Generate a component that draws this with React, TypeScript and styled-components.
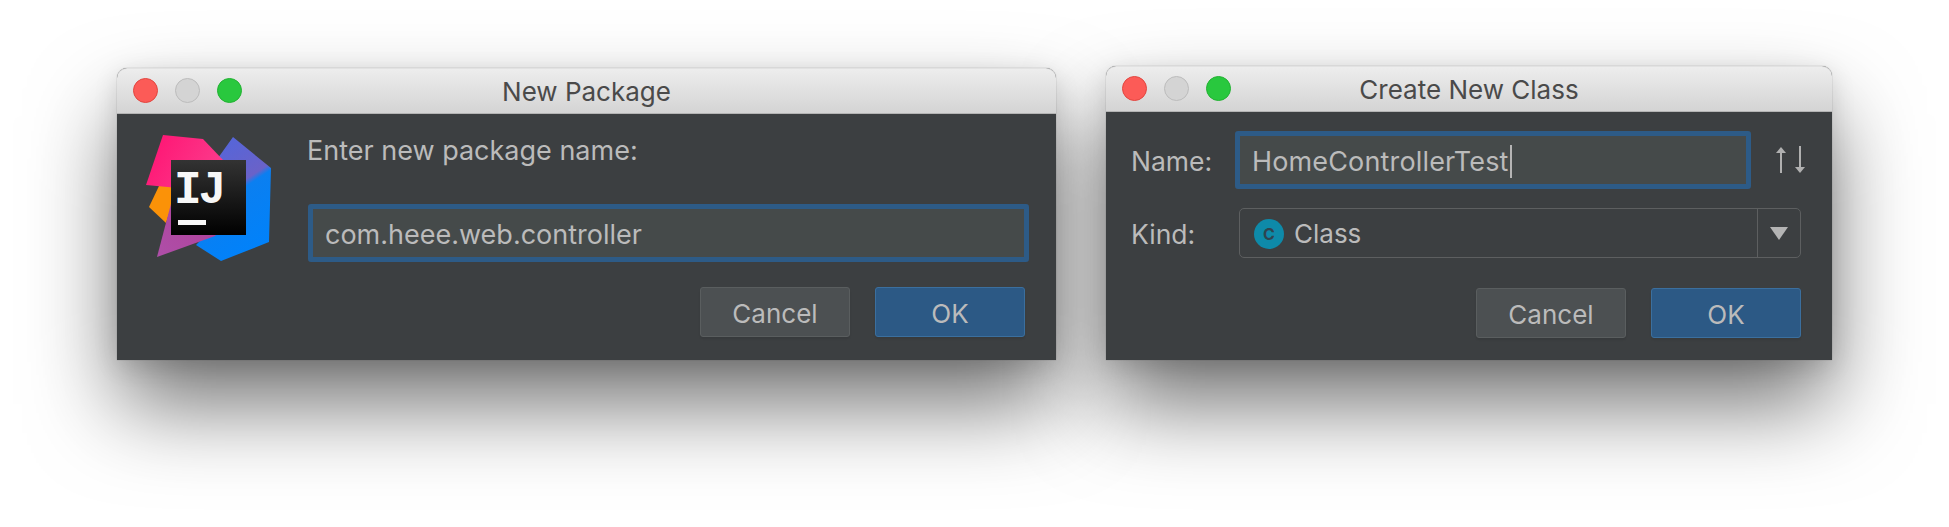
import React from "react";
import styled, { createGlobalStyle } from "styled-components";

const GlobalStyle = createGlobalStyle`
  html, body {
    margin: 0;
    background: #fff;
    overflow: hidden;
  }
  body {
    font-family: "Inter", "Liberation Sans", sans-serif;
  }
`;

const Page = styled.div`
  isolation: isolate;
  display: flex;
  align-items: flex-end;
  gap: 50px;
  width: 1949px;
  height: 527px;
  box-sizing: border-box;
  padding: 66px 0 167px 117px;
`;

const Window = styled.div<{ $width: number; $height: number }>`
  position: relative;
  display: flex;
  flex-direction: column;
  width: ${(p) => p.$width}px;
  height: ${(p) => p.$height}px;
  border-radius: 10px 10px 0 0;
  background: #3c3f41;

  /* shadow sits behind both windows, so one never darkens the other */
  &::before {
    content: "";
    position: absolute;
    inset: 0;
    z-index: -1;
    border-radius: 10px 10px 0 0;
    box-shadow: 0 46px 88px -2px rgba(0, 0, 0, 0.56), 0 6px 24px rgba(0, 0, 0, 0.12), 0 0 1px rgba(0, 0, 0, 0.5);
  }
`;

const TitleBar = styled.div`
  position: relative;
  flex: none;
  display: flex;
  align-items: center;
  justify-content: center;
  height: 46px;
  box-sizing: border-box;
  padding-top: 2px;
  border-radius: 10px 10px 0 0;
  border-top: 1px solid #e2e2e2;
  border-bottom: 1px solid #b4b4b4;
  background: linear-gradient(#ededed, #d4d4d4);
  color: #4a4a4a;
  font-size: 26px;
  line-height: 30px;
`;

const Lights = styled.div`
  position: absolute;
  left: 16px;
  top: 9px;
  display: flex;
  gap: 17px;
`;

const Light = styled.span<{ $fill: string; $edge: string }>`
  width: 25px;
  height: 25px;
  box-sizing: border-box;
  border-radius: 50%;
  background: ${(p) => p.$fill};
  border: 1px solid ${(p) => p.$edge};
`;

const PackageBody = styled.div`
  flex: 1;
  display: flex;
  padding: 21px 27px 0 29px;
`;

const Logo = styled.svg`
  flex: none;
  width: 125px;
  height: 126px;
  margin-right: 37px;
`;

const PackageForm = styled.div`
  flex: 1;
  display: flex;
  flex-direction: column;
`;

const Prompt = styled.div`
  height: 69px;
  margin-left: -1px;
  color: #bbbbbb;
  font-size: 27px;
  line-height: 32px;
`;

const FocusedInput = styled.div<{ $width?: number; $spacing?: number }>`
  display: flex;
  align-items: center;
  flex: none;
  width: ${(p) => (p.$width ? `${p.$width}px` : "auto")};
  height: 58px;
  box-sizing: border-box;
  padding: 2px 12px 0;
  border: 5px solid #2d5b87;
  border-radius: 3px;
  background: #454a4a;
  color: #bbbbbb;
  font-size: 27px;
  letter-spacing: ${(p) => p.$spacing ?? 0}px;
`;

const Caret = styled.span`
  width: 2px;
  height: 33px;
  margin-left: 1px;
  background: #b5b5b5;
`;

const Buttons = styled.div<{ $top: number; $right: number }>`
  display: flex;
  justify-content: flex-end;
  gap: 25px;
  margin-top: ${(p) => p.$top}px;
  padding-right: ${(p) => p.$right}px;
`;

const Button = styled.div<{ $primary?: boolean }>`
  display: flex;
  align-items: center;
  justify-content: center;
  width: 150px;
  height: 50px;
  box-sizing: border-box;
  padding-top: 2px;
  border-radius: 3px;
  border: 1px solid ${(p) => (p.$primary ? "#3b6f9e" : "#5a5e5f")};
  background: ${(p) => (p.$primary ? "#2c5985" : "#4c5052")};
  box-shadow: 0 2px 2px rgba(0, 0, 0, 0.08);
  color: #bbbbbb;
  font-size: 26px;
`;

const ClassBody = styled.div`
  flex: 1;
  display: flex;
  flex-direction: column;
  padding: 19px 31px 0 25px;
`;

const FormRow = styled.div<{ $top?: number }>`
  display: flex;
  align-items: center;
  margin-top: ${(p) => p.$top ?? 0}px;
`;

const RowLabel = styled.div<{ $width: number }>`
  flex: none;
  width: ${(p) => p.$width}px;
  padding-top: 2px;
  color: #bbbbbb;
  font-size: 26.5px;
`;

const SwapIcon = styled.svg`
  flex: none;
  width: 34px;
  height: 28px;
  margin-left: 24px;
`;

const Combo = styled.div`
  flex: 1;
  display: flex;
  align-items: stretch;
  height: 50px;
  box-sizing: border-box;
  border: 1px solid #5d5f60;
  border-radius: 5px;
`;

const ComboValue = styled.div`
  flex: 1;
  display: flex;
  align-items: center;
  gap: 10px;
  padding: 1px 0 0 14px;
  color: #bbbbbb;
  font-size: 26px;
`;

const ClassBadge = styled.span`
  display: flex;
  align-items: center;
  justify-content: center;
  width: 30px;
  height: 30px;
  border-radius: 50%;
  background: #0e8aa9;
  color: #2f4450;
  font-size: 16px;
  font-weight: 700;
`;

const ComboArrow = styled.div`
  flex: none;
  display: flex;
  align-items: center;
  justify-content: center;
  width: 42px;
  border-left: 1px solid #5d5f60;

  &::after {
    content: "";
    border-left: 9px solid transparent;
    border-right: 9px solid transparent;
    border-top: 13px solid #b4b4b4;
  }
`;

const TitleLights = () => (
  <Lights>
    <Light $fill="#fc5b57" $edge="#e2463f" />
    <Light $fill="#d4d4d4" $edge="#bcbcbc" />
    <Light $fill="#29c83e" $edge="#22b232" />
  </Lights>
);

const IdeaLogo = () => (
  <Logo viewBox="146 135 125 126">
    <defs>
      <linearGradient id="blueFill" x1="0.3" y1="0" x2="0.7" y2="1">
        <stop offset="0" stopColor="#5266dc" />
        <stop offset="0.42" stopColor="#6a62c8" />
        <stop offset="0.47" stopColor="#0b7ff0" />
        <stop offset="1" stopColor="#0082fb" />
      </linearGradient>
      <linearGradient id="pinkFill" x1="0" y1="0.2" x2="1" y2="0.6">
        <stop offset="0" stopColor="#ff1473" />
        <stop offset="1" stopColor="#fb3c8c" />
      </linearGradient>
      <linearGradient id="purpleFill" x1="0" y1="1" x2="1" y2="0.3">
        <stop offset="0" stopColor="#ae4fa8" />
        <stop offset="1" stopColor="#b03e98" />
      </linearGradient>
      <linearGradient id="blackFill" x1="0" y1="0" x2="0" y2="1">
        <stop offset="0" stopColor="#333333" />
        <stop offset="1" stopColor="#000000" />
      </linearGradient>
    </defs>
    <polygon points="218,158 233,137 271,168 269,242 221,261 196,245 230,210" fill="url(#blueFill)" />
    <polygon points="159,186 149,207 166,223 178,186" fill="#fb9208" />
    <polygon points="172,200 157,257 215,236 240,205" fill="url(#purpleFill)" />
    <polygon points="163,135 203,139 223,160 200,190 146,185" fill="url(#pinkFill)" />
    <rect x="171" y="160" width="75" height="75" fill="url(#blackFill)" />
    <text x="174" y="203" fill="#f7f7f7" fontFamily="'Liberation Mono', monospace" fontWeight="700" fontSize="46" letterSpacing="-3">
      IJ
    </text>
    <rect x="178" y="220" width="28" height="5" fill="#f7f7f7" />
  </Logo>
);

export default function App() {
  return (
    <>
      <GlobalStyle />
      <Page>
        <Window $width={939} $height={292}>
          <TitleBar>
            <TitleLights />
            New Package
          </TitleBar>
          <PackageBody>
            <IdeaLogo />
            <PackageForm>
              <Prompt>Enter new package name:</Prompt>
              <FocusedInput>com.heee.web.controller</FocusedInput>
              <Buttons $top={25} $right={4}>
                <Button>Cancel</Button>
                <Button $primary>OK</Button>
              </Buttons>
            </PackageForm>
          </PackageBody>
        </Window>
        <Window $width={726} $height={294}>
          <TitleBar>
            <TitleLights />
            Create New Class
          </TitleBar>
          <ClassBody>
            <FormRow>
              <RowLabel $width={104}>Name:</RowLabel>
              <FocusedInput $width={516} $spacing={0.15}>
                HomeControllerTest
                <Caret />
              </FocusedInput>
              <SwapIcon viewBox="0 0 34 28">
                <path d="M6 27V4" stroke="#b0b0b0" strokeWidth="2" />
                <polygon points="6,1 1,7 11,7" fill="#b0b0b0" />
                <path d="M25 0V23" stroke="#b0b0b0" strokeWidth="2" />
                <polygon points="25,27 20,21 30,21" fill="#b0b0b0" />
              </SwapIcon>
            </FormRow>
            <FormRow $top={19}>
              <RowLabel $width={108}>Kind:</RowLabel>
              <Combo>
                <ComboValue>
                  <ClassBadge>C</ClassBadge>
                  Class
                </ComboValue>
                <ComboArrow />
              </Combo>
            </FormRow>
            <Buttons $top={30} $right={0}>
              <Button>Cancel</Button>
              <Button $primary>OK</Button>
            </Buttons>
          </ClassBody>
        </Window>
      </Page>
    </>
  );
}
